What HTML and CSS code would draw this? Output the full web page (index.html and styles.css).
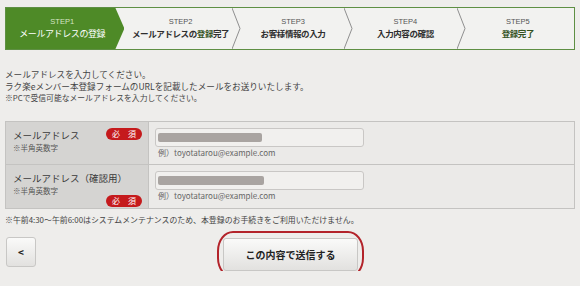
FILE: index.html
```html
<!DOCTYPE html>
<html lang="ja"><head>
    <meta charset="UTF-8">
    <title>メールアドレスの登録</title>
    <link rel="stylesheet" href="styles.css">
</head>
<body>
    <div class="steps">
        <div class="step step-current">
            <div class="step-num">STEP1</div>
            <div class="step-name">メールアドレスの登録</div>
        </div>
        <div class="step">
            <div class="step-num">STEP2</div>
            <div class="step-name">メールアドレスの<span class="hl">登録</span>完了</div>
            <svg class="chevron" viewBox="0 0 9 42" preserveAspectRatio="none"><polyline points="0,0 8,21 0,42" /></svg>
        </div>
        <div class="step">
            <div class="step-num">STEP3</div>
            <div class="step-name">お客様情報の入力</div>
            <svg class="chevron" viewBox="0 0 9 42" preserveAspectRatio="none"><polyline points="0,0 8,21 0,42" /></svg>
        </div>
        <div class="step">
            <div class="step-num">STEP4</div>
            <div class="step-name">入力内容の確認</div>
            <svg class="chevron" viewBox="0 0 9 42" preserveAspectRatio="none"><polyline points="0,0 8,21 0,42" /></svg>
        </div>
        <div class="step">
            <div class="step-num">STEP5</div>
            <div class="step-name"><span class="hl">登録完了</span></div>
        </div>
    </div>

    <div class="intro">
        <p>メールアドレスを入力してください。</p>
        <p>ラク楽eメンバー本登録フォームのURLを記載したメールをお送りいたします。</p>
        <p class="small">※PCで受信可能なメールアドレスを入力してください。</p>
    </div>

    <div class="form-table">
        <div class="form-row">
            <div class="form-label">
                <div class="label-text">
                    <div class="label-main">メールアドレス</div>
                    <div class="label-sub">※半角英数字</div>
                </div>
                <span class="required">必　須</span>
            </div>
            <div class="form-field">
                <div class="input"><span class="blur"></span></div>
                <div class="example">例）toyotatarou@example.com</div>
            </div>
        </div>
        <div class="form-row row-tall">
            <div class="form-label label-stack">
                <div class="label-text">
                    <div class="label-main">メールアドレス（確認用）</div>
                    <div class="label-sub">※半角英数字</div>
                </div>
                <span class="required">必　須</span>
            </div>
            <div class="form-field">
                <div class="input"><span class="blur blur-wide"></span></div>
                <div class="example">例）toyotatarou@example.com</div>
            </div>
        </div>
    </div>

    <p class="notice">※午前4:30～午前6:00はシステムメンテナンスのため、本登録のお手続きをご利用いただけません。</p>

    <div class="actions">
        <button class="btn btn-back">&lt;</button>
        <div class="submit-wrap">
            <button class="btn btn-submit">この内容で送信する</button>
            <span class="circle-mark"></span>
        </div>
    </div>
</body>
</html>
```

FILE: styles.css
```css
* {
    box-sizing: border-box;
}
body {
    font-family: "Noto Sans CJK JP", "Noto Sans", sans-serif;
    margin: 0;
    padding: 7px 5px 0;
    background-color: #eeedeb;
    color: #3a3a3a;
}
.steps {
    display: flex;
    height: 43px;
    border: 1px solid #5e8f43;
    background-color: #f2f2f0;
}
.step {
    flex: 1;
    position: relative;
    display: flex;
    flex-direction: column;
    align-items: center;
    justify-content: center;
    text-align: center;
    white-space: nowrap;
}
.step-num {
    font-family: "Liberation Sans", sans-serif;
    font-size: 7.5px;
    line-height: 10px;
    color: #555;
}
.step-name {
    font-size: 8.5px;
    line-height: 13px;
    font-weight: bold;
    color: #2e2e2e;
    letter-spacing: -0.4px;
}
.step-name .hl {
    color: #34521f;
}
.step-current {
    background-color: #4e8a27;
    clip-path: polygon(0 0, calc(100% - 9px) 0, 100% 50%, calc(100% - 9px) 100%, 0 100%);
    padding-right: 6px;
}
.step-current .step-num {
    color: #d4e4c4;
}
.step-current .step-name {
    color: #fff;
    font-weight: normal;
    font-size: 9px;
}
.chevron {
    position: absolute;
    right: -4px;
    top: 0;
    width: 9px;
    height: 41px;
    fill: none;
    stroke: #8d8d8d;
    stroke-width: 1;
}
.intro {
    margin-top: 19px;
    font-size: 8.6px;
    line-height: 11.5px;
    color: #444;
}
.intro p {
    margin: 0;
}
.intro .small {
    font-size: 7.8px;
}
.form-table {
    margin-top: 17px;
    border: 1px solid #c4c3c1;
}
.form-row {
    display: flex;
    height: 42px;
}
.form-row + .form-row {
    border-top: 1px solid #c4c3c1;
}
.row-tall {
    height: 44px;
}
.form-label {
    width: 143px;
    background-color: #d5d4d2;
    border-right: 1px solid #c4c3c1;
    display: flex;
    justify-content: space-between;
    align-items: flex-start;
    padding: 6px 6px 0 7px;
}
.label-stack {
    flex-direction: column;
    align-items: stretch;
    justify-content: flex-start;
}
.label-stack .required {
    align-self: flex-end;
    margin-top: -1px;
}
.label-main {
    font-size: 9.5px;
    line-height: 14px;
    color: #3a3a3a;
}
.label-sub {
    font-size: 7.5px;
    line-height: 11px;
    color: #555;
}
.required {
    display: inline-block;
    width: 36px;
    height: 12px;
    line-height: 12px;
    border-radius: 6px;
    background-color: #c51a1c;
    color: #fff;
    font-size: 8px;
    text-align: center;
}
.form-field {
    flex: 1;
    background-color: #ebeae8;
    padding: 6px 0 0 6px;
}
.input {
    width: 209px;
    height: 19px;
    border: 1px solid #c9c7c5;
    border-radius: 3px;
    background-color: #f1f0ee;
    display: flex;
    align-items: center;
    padding-left: 2px;
}
.blur {
    display: block;
    width: 104px;
    height: 9px;
    border-radius: 2px;
    background-color: #a9a4a1;
}
.blur-wide {
    width: 106px;
}
.example {
    margin-top: 1px;
    padding-left: 3px;
    font-size: 8px;
    line-height: 10px;
    color: #666;
}
.notice {
    margin: 6px 0 0;
    font-size: 7.9px;
    line-height: 10px;
    color: #444;
}
.actions {
    display: flex;
    align-items: flex-start;
    margin-top: 12px;
    padding-left: 1px;
}
.btn {
    font-family: "Noto Sans CJK JP", "Noto Sans", sans-serif;
    border: 1px solid #c8c7c5;
    border-radius: 3px;
    background: linear-gradient(#fafaf9, #e2e1df);
    color: #222;
    font-weight: bold;
    cursor: pointer;
}
.btn-back {
    width: 30px;
    height: 30px;
    font-size: 10px;
    padding: 0;
}
.submit-wrap {
    position: relative;
    margin-left: 187px;
    margin-top: 1px;
}
.btn-submit {
    width: 135px;
    height: 33px;
    font-size: 10px;
}
.circle-mark {
    position: absolute;
    left: -6px;
    top: -7px;
    width: 147px;
    height: 47px;
    border: 2px solid #b3232a;
    border-radius: 16px / 20px;
    pointer-events: none;
}
```
